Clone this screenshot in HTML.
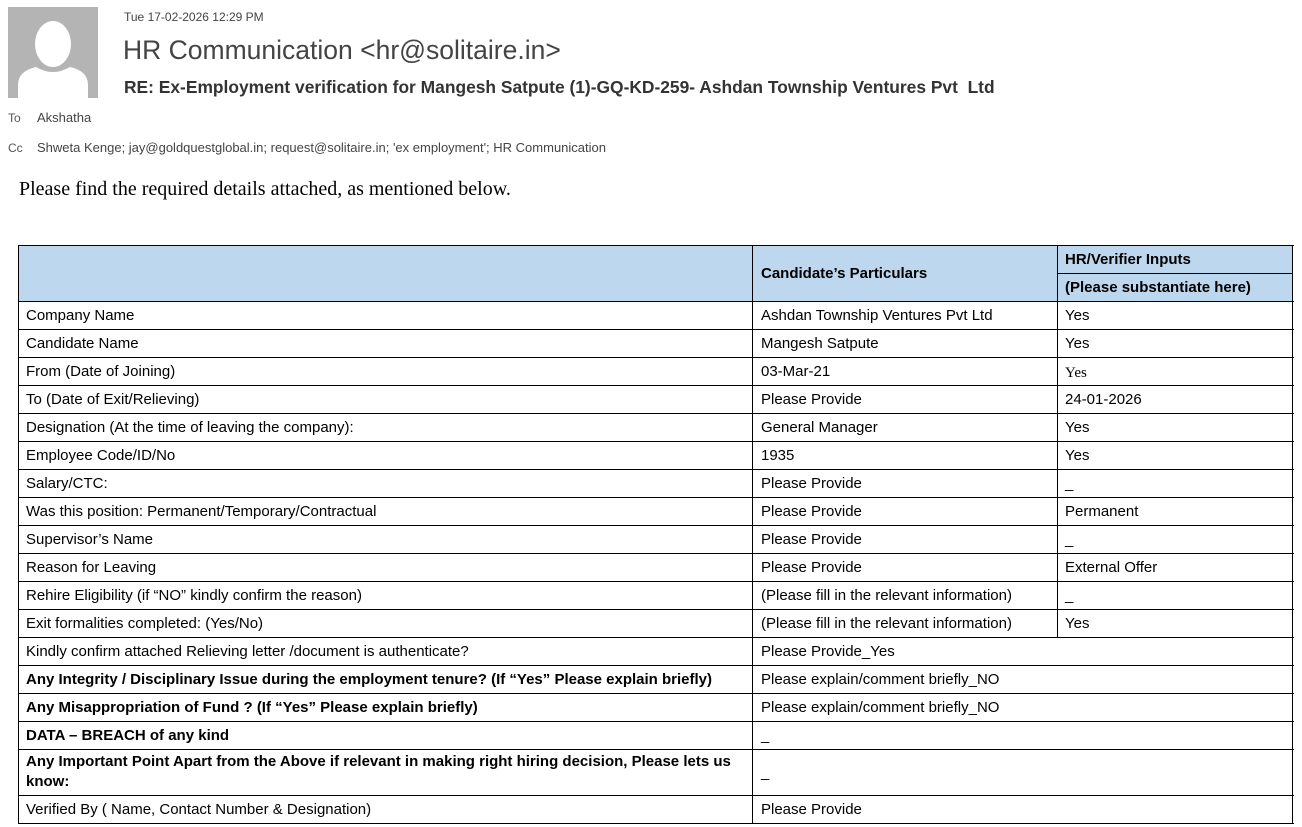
<!DOCTYPE html>
<html><head><style>
body{margin:0;background:#fff;width:1302px;height:827px;position:relative;overflow:hidden;font-family:"Liberation Sans",sans-serif;color:#000}
.a{position:absolute;white-space:nowrap}
.c{position:absolute;box-sizing:border-box;font-size:15px;padding-left:8px;display:flex;align-items:center;white-space:nowrap}
.b{font-weight:bold}
.hl{position:absolute;background:#000;height:1px}
.vl{position:absolute;background:#000;width:1px}
</style></head><body>
<div class="a" style="left:8px;top:7px;width:90px;height:91px;background:#b4b4b4;overflow:hidden">
<svg width="90" height="91" viewBox="0 0 90 91"><ellipse cx="45" cy="37" rx="18" ry="23" fill="#fff"/><path d="M10 91 L10 78 Q10 64 28 60 Q45 70 62 60 Q80 64 80 78 L80 91 Z" fill="#fff"/></svg></div>
<div class="a" style="left:124px;top:10px;font-size:12px;color:#444">Tue 17-02-2026 12:29 PM</div>
<div class="a" style="left:123px;top:35px;font-size:26.5px;color:#444">HR Communication &lt;hr@solitaire.in&gt;</div>
<div class="a" style="left:124px;top:77px;font-size:17.4px;font-weight:bold;color:#333">RE: Ex-Employment verification for Mangesh Satpute (1)-GQ-KD-259- Ashdan Township Ventures Pvt&nbsp; Ltd</div>
<div class="a" style="left:8px;top:111px;font-size:12px;color:#555">To</div>
<div class="a" style="left:37px;top:110px;font-size:13px;color:#444">Akshatha</div>
<div class="a" style="left:8px;top:141px;font-size:12px;color:#555">Cc</div>
<div class="a" style="left:37px;top:140px;font-size:13px;color:#444">Shweta Kenge; jay@goldquestglobal.in; request@solitaire.in; 'ex employment'; HR Communication</div>
<div class="a" style="left:19px;top:178px;font-size:20px;font-family:'Liberation Serif',serif">Please find the required details attached, as mentioned below.</div>

<div class="a" style="left:18px;top:245px;width:1275px;height:56px;background:#bdd7ee"></div>
<div class="c b" style="left:753px;top:245px;height:56px">Candidate’s Particulars</div>
<div class="c b" style="left:1057px;top:245px;height:28px">HR/Verifier Inputs</div>
<div class="c b" style="left:1057px;top:273px;height:28px">(Please substantiate here)</div>
<div class="hl" style="left:1057px;top:273px;width:236px"></div>

<div class="hl" style="left:18px;top:245px;width:1276px"></div>
<div class="hl" style="left:18px;top:301px;width:1276px"></div>
<div class="vl" style="left:18px;top:245px;height:578px"></div>
<div class="vl" style="left:752px;top:245px;height:578px"></div>
<div class="vl" style="left:1057px;top:245px;height:392px"></div>
<div class="vl" style="left:1292px;top:245px;height:578px"></div>

<div id="rows"></div>
<script>
var r=[["Company Name","Ashdan Township Ventures Pvt Ltd","Yes"],["Candidate Name","Mangesh Satpute","Yes"],["From (Date of Joining)","03-Mar-21","<span style='font-family:Liberation Serif,serif;position:relative;top:2px'>Yes</span>"],["To (Date of Exit/Relieving)","Please Provide","24-01-2026"],["Designation (At the time of leaving the company):","General Manager","Yes"],["Employee Code/ID/No","1935","Yes"],["Salary/CTC:","Please Provide","_"],["Was this position: Permanent/Temporary/Contractual","Please Provide","Permanent"],["Supervisor’s Name","Please Provide","_"],["Reason for Leaving","Please Provide","External Offer"],["Rehire Eligibility (if “NO” kindly confirm the reason)","(Please fill in the relevant information)","_"],["Exit formalities completed: (Yes/No)","(Please fill in the relevant information)","Yes"],["Kindly confirm attached Relieving letter /document is authenticate?","Please Provide_Yes"],["<b>Any Integrity / Disciplinary Issue during the employment tenure? (If “Yes” Please explain briefly)</b>","Please explain/comment briefly_NO"],["<b>Any Misappropriation of Fund ? (If “Yes” Please explain briefly)</b>","Please explain/comment briefly_NO"],["<b>DATA – BREACH of any kind</b>","_"],["<b>Any Important Point Apart from the Above if relevant in making right hiring decision, Please lets us know:</b>","_",null,46],["Verified By ( Name, Contact Number &amp; Designation)","Please Provide"]];
var y=301,h="";
r.forEach(function(x){var H=x[3]||28;
var s=H>28?"white-space:normal;line-height:20px;width:720px;":"";
h+='<div class="c" style="left:18px;top:'+y+'px;height:'+H+'px;'+s+'"><span>'+x[0]+'</span></div>';
h+='<div class="c" style="left:753px;top:'+y+'px;height:'+H+'px">'+x[1]+'</div>';
if(x[2])h+='<div class="c" style="left:1057px;top:'+y+'px;height:'+H+'px">'+x[2]+'</div>';
y+=H;h+='<div class="hl" style="left:18px;top:'+y+'px;width:1276px"></div>';});
document.getElementById("rows").innerHTML=h;
</script>
</body></html>
